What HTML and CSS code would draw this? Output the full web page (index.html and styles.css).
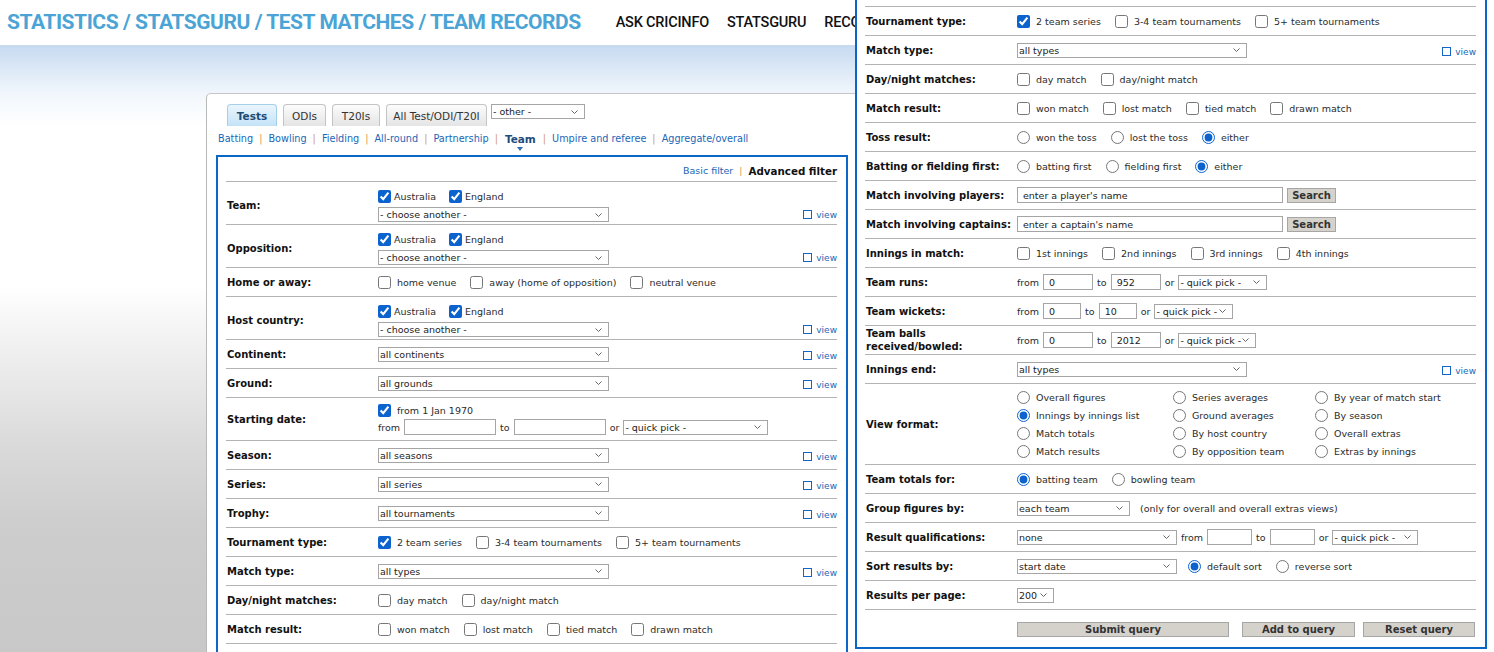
FILE: index.html
```html
<!DOCTYPE html>
<html lang="en">
<head>
<meta charset="utf-8">
<title>Statsguru - Team records</title>
<link rel="stylesheet" href="styles.css">
</head>
<body>
<header class="top">
  <h1 class="crumb">STATISTICS / STATSGURU / TEST MATCHES / TEAM RECORDS</h1>
  <nav class="topnav"><a href="#">ASK CRICINFO</a><a href="#">STATSGURU</a><a href="#">RECORDS</a></nav>
</header>
<main class="stage">
  <section class="panel">
    <div class="tabs">
      <span class="tab on w-tests">Tests</span>
      <span class="tab w-odi">ODIs</span>
      <span class="tab w-t20">T20Is</span>
      <span class="tab w-all">All Test/ODI/T20I</span>
      <span class="sel w94">- other -<svg class="chev" viewBox="0 0 7 4"><path d="M.5.5 3.5 3.5 6.5.5"/></svg></span>
    </div>
    <nav class="types">
      <a href="#">Batting</a><i>|</i><a href="#">Bowling</a><i>|</i><a href="#">Fielding</a><i>|</i><a href="#">All-round</a><i>|</i><a href="#">Partnership</a><i>|</i><b class="cur">Team</b><i>|</i><a href="#">Umpire and referee</a><i>|</i><a href="#">Aggregate/overall</a>
    </nav>
    <form class="query main">
      <div class="switch"><a href="#">Basic filter</a><i>|</i><b>Advanced filter</b></div>

      <div class="row dbl">
        <div class="lab">Team:</div>
        <div class="ctl">
          <div class="line"><label class="ck tight"><input type="checkbox" checked>Australia</label><label class="ck tight"><input type="checkbox" checked>England</label></div>
          <div class="line"><span class="sel w231">- choose another -<svg class="chev" viewBox="0 0 7 4"><path d="M.5.5 3.5 3.5 6.5.5"/></svg></span></div>
        </div>
        <label class="view"><i></i>view</label>
      </div>

      <div class="row dbl">
        <div class="lab">Opposition:</div>
        <div class="ctl">
          <div class="line"><label class="ck tight"><input type="checkbox" checked>Australia</label><label class="ck tight"><input type="checkbox" checked>England</label></div>
          <div class="line"><span class="sel w231">- choose another -<svg class="chev" viewBox="0 0 7 4"><path d="M.5.5 3.5 3.5 6.5.5"/></svg></span></div>
        </div>
        <label class="view"><i></i>view</label>
      </div>

      <div class="row">
        <div class="lab">Home or away:</div>
        <div class="ctl"><div class="line"><label class="ck"><input type="checkbox">home venue</label><label class="ck"><input type="checkbox">away (home of opposition)</label><label class="ck"><input type="checkbox">neutral venue</label></div></div>
      </div>

      <div class="row dbl">
        <div class="lab">Host country:</div>
        <div class="ctl">
          <div class="line"><label class="ck tight"><input type="checkbox" checked>Australia</label><label class="ck tight"><input type="checkbox" checked>England</label></div>
          <div class="line"><span class="sel w231">- choose another -<svg class="chev" viewBox="0 0 7 4"><path d="M.5.5 3.5 3.5 6.5.5"/></svg></span></div>
        </div>
        <label class="view"><i></i>view</label>
      </div>

      <div class="row">
        <div class="lab">Continent:</div>
        <div class="ctl"><div class="line"><span class="sel w231">all continents<svg class="chev" viewBox="0 0 7 4"><path d="M.5.5 3.5 3.5 6.5.5"/></svg></span></div></div>
        <label class="view"><i></i>view</label>
      </div>

      <div class="row">
        <div class="lab">Ground:</div>
        <div class="ctl"><div class="line"><span class="sel w231">all grounds<svg class="chev" viewBox="0 0 7 4"><path d="M.5.5 3.5 3.5 6.5.5"/></svg></span></div></div>
        <label class="view"><i></i>view</label>
      </div>

      <div class="row">
        <div class="lab">Starting date:</div>
        <div class="ctl g1">
          <div class="line"><label class="ck"><input type="checkbox" checked>from 1 Jan 1970</label></div>
          <div class="line">from<input class="txt w92" type="text" value="">to<input class="txt w92" type="text" value="">or<span class="sel w145">- quick pick -<svg class="chev" viewBox="0 0 7 4"><path d="M.5.5 3.5 3.5 6.5.5"/></svg></span></div>
        </div>
      </div>

      <div class="row">
        <div class="lab">Season:</div>
        <div class="ctl"><div class="line"><span class="sel w231">all seasons<svg class="chev" viewBox="0 0 7 4"><path d="M.5.5 3.5 3.5 6.5.5"/></svg></span></div></div>
        <label class="view"><i></i>view</label>
      </div>

      <div class="row">
        <div class="lab">Series:</div>
        <div class="ctl"><div class="line"><span class="sel w231">all series<svg class="chev" viewBox="0 0 7 4"><path d="M.5.5 3.5 3.5 6.5.5"/></svg></span></div></div>
        <label class="view"><i></i>view</label>
      </div>

      <div class="row">
        <div class="lab">Trophy:</div>
        <div class="ctl"><div class="line"><span class="sel w231">all tournaments<svg class="chev" viewBox="0 0 7 4"><path d="M.5.5 3.5 3.5 6.5.5"/></svg></span></div></div>
        <label class="view"><i></i>view</label>
      </div>

      <div class="row">
        <div class="lab">Tournament type:</div>
        <div class="ctl"><div class="line"><label class="ck"><input type="checkbox" checked>2 team series</label><label class="ck"><input type="checkbox">3-4 team tournaments</label><label class="ck"><input type="checkbox">5+ team tournaments</label></div></div>
      </div>

      <div class="row">
        <div class="lab">Match type:</div>
        <div class="ctl"><div class="line"><span class="sel w231">all types<svg class="chev" viewBox="0 0 7 4"><path d="M.5.5 3.5 3.5 6.5.5"/></svg></span></div></div>
        <label class="view"><i></i>view</label>
      </div>

      <div class="row">
        <div class="lab">Day/night matches:</div>
        <div class="ctl"><div class="line"><label class="ck"><input type="checkbox">day match</label><label class="ck"><input type="checkbox">day/night match</label></div></div>
      </div>

      <div class="row">
        <div class="lab">Match result:</div>
        <div class="ctl"><div class="line"><label class="ck"><input type="checkbox">won match</label><label class="ck"><input type="checkbox">lost match</label><label class="ck"><input type="checkbox">tied match</label><label class="ck"><input type="checkbox">drawn match</label></div></div>
      </div>
    </form>
  </section>
</main>

<aside class="shot">
  <div class="query cont">
    <div class="tail"></div>

    <div class="row">
      <div class="lab">Tournament type:</div>
      <div class="ctl"><div class="line"><label class="ck"><input type="checkbox" checked>2 team series</label><label class="ck"><input type="checkbox">3-4 team tournaments</label><label class="ck"><input type="checkbox">5+ team tournaments</label></div></div>
    </div>

    <div class="row">
      <div class="lab">Match type:</div>
      <div class="ctl"><div class="line"><span class="sel w230">all types<svg class="chev" viewBox="0 0 7 4"><path d="M.5.5 3.5 3.5 6.5.5"/></svg></span></div></div>
      <label class="view"><i></i>view</label>
    </div>

    <div class="row">
      <div class="lab">Day/night matches:</div>
      <div class="ctl"><div class="line"><label class="ck"><input type="checkbox">day match</label><label class="ck"><input type="checkbox">day/night match</label></div></div>
    </div>

    <div class="row">
      <div class="lab">Match result:</div>
      <div class="ctl"><div class="line"><label class="ck"><input type="checkbox">won match</label><label class="ck"><input type="checkbox">lost match</label><label class="ck"><input type="checkbox">tied match</label><label class="ck"><input type="checkbox">drawn match</label></div></div>
    </div>

    <div class="row">
      <div class="lab">Toss result:</div>
      <div class="ctl"><div class="line"><label class="ck"><input type="radio" name="toss">won the toss</label><label class="ck"><input type="radio" name="toss">lost the toss</label><label class="ck"><input type="radio" name="toss" checked>either</label></div></div>
    </div>

    <div class="row">
      <div class="lab">Batting or fielding first:</div>
      <div class="ctl"><div class="line"><label class="ck"><input type="radio" name="bat">batting first</label><label class="ck"><input type="radio" name="bat">fielding first</label><label class="ck"><input type="radio" name="bat" checked>either</label></div></div>
    </div>

    <div class="row">
      <div class="lab">Match involving players:</div>
      <div class="ctl"><div class="line"><input class="txt w266" type="text" value="enter a player's name"><button class="btn srch" type="button">Search</button></div></div>
    </div>

    <div class="row">
      <div class="lab">Match involving captains:</div>
      <div class="ctl"><div class="line"><input class="txt w266" type="text" value="enter a captain's name"><button class="btn srch" type="button">Search</button></div></div>
    </div>

    <div class="row">
      <div class="lab">Innings in match:</div>
      <div class="ctl"><div class="line"><label class="ck"><input type="checkbox">1st innings</label><label class="ck"><input type="checkbox">2nd innings</label><label class="ck"><input type="checkbox">3rd innings</label><label class="ck"><input type="checkbox">4th innings</label></div></div>
    </div>

    <div class="row">
      <div class="lab">Team runs:</div>
      <div class="ctl"><div class="line">from<input class="txt w50" type="text" value="0">to<input class="txt w50" type="text" value="952">or<span class="sel w89">- quick pick -<svg class="chev" viewBox="0 0 7 4"><path d="M.5.5 3.5 3.5 6.5.5"/></svg></span></div></div>
    </div>

    <div class="row">
      <div class="lab">Team wickets:</div>
      <div class="ctl"><div class="line">from<input class="txt w38" type="text" value="0">to<input class="txt w38" type="text" value="10">or<span class="sel w79">- quick pick -<svg class="chev" viewBox="0 0 7 4"><path d="M.5.5 3.5 3.5 6.5.5"/></svg></span></div></div>
    </div>

    <div class="row tight-row">
      <div class="lab">Team balls<br>received/bowled:</div>
      <div class="ctl"><div class="line">from<input class="txt w50" type="text" value="0">to<input class="txt w50" type="text" value="2012">or<span class="sel w78">- quick pick -<svg class="chev" viewBox="0 0 7 4"><path d="M.5.5 3.5 3.5 6.5.5"/></svg></span></div></div>
    </div>

    <div class="row">
      <div class="lab">Innings end:</div>
      <div class="ctl"><div class="line"><span class="sel w230">all types<svg class="chev" viewBox="0 0 7 4"><path d="M.5.5 3.5 3.5 6.5.5"/></svg></span></div></div>
      <label class="view"><i></i>view</label>
    </div>

    <div class="row vf-row">
      <div class="lab">View format:</div>
      <div class="vf">
        <label class="ck"><input type="radio" name="vf">Overall figures</label>
        <label class="ck"><input type="radio" name="vf">Series averages</label>
        <label class="ck"><input type="radio" name="vf">By year of match start</label>
        <label class="ck"><input type="radio" name="vf" checked>Innings by innings list</label>
        <label class="ck"><input type="radio" name="vf">Ground averages</label>
        <label class="ck"><input type="radio" name="vf">By season</label>
        <label class="ck"><input type="radio" name="vf">Match totals</label>
        <label class="ck"><input type="radio" name="vf">By host country</label>
        <label class="ck"><input type="radio" name="vf">Overall extras</label>
        <label class="ck"><input type="radio" name="vf">Match results</label>
        <label class="ck"><input type="radio" name="vf">By opposition team</label>
        <label class="ck"><input type="radio" name="vf">Extras by innings</label>
      </div>
    </div>

    <div class="row">
      <div class="lab">Team totals for:</div>
      <div class="ctl"><div class="line"><label class="ck"><input type="radio" name="tt" checked>batting team</label><label class="ck"><input type="radio" name="tt">bowling team</label></div></div>
    </div>

    <div class="row">
      <div class="lab">Group figures by:</div>
      <div class="ctl"><div class="line"><span class="sel w113">each team<svg class="chev" viewBox="0 0 7 4"><path d="M.5.5 3.5 3.5 6.5.5"/></svg></span><span class="note">(only for overall and overall extras views)</span></div></div>
    </div>

    <div class="row">
      <div class="lab">Result qualifications:</div>
      <div class="ctl"><div class="line"><span class="sel w160">none<svg class="chev" viewBox="0 0 7 4"><path d="M.5.5 3.5 3.5 6.5.5"/></svg></span>from<input class="txt w45" type="text" value="">to<input class="txt w45" type="text" value="">or<span class="sel w86">- quick pick -<svg class="chev" viewBox="0 0 7 4"><path d="M.5.5 3.5 3.5 6.5.5"/></svg></span></div></div>
    </div>

    <div class="row">
      <div class="lab">Sort results by:</div>
      <div class="ctl"><div class="line"><span class="sel w160">start date<svg class="chev" viewBox="0 0 7 4"><path d="M.5.5 3.5 3.5 6.5.5"/></svg></span><label class="ck sortgap"><input type="radio" name="sort" checked>default sort</label><label class="ck"><input type="radio" name="sort">reverse sort</label></div></div>
    </div>

    <div class="row">
      <div class="lab">Results per page:</div>
      <div class="ctl"><div class="line"><span class="sel w37">200<svg class="chev" viewBox="0 0 7 4"><path d="M.5.5 3.5 3.5 6.5.5"/></svg></span></div></div>
    </div>

    <div class="actions">
      <button class="btn w212" type="button">Submit query</button>
      <button class="btn w113b" type="button">Add to query</button>
      <button class="btn w112" type="button">Reset query</button>
    </div>
  </div>
</aside>
</body>
</html>
```

FILE: styles.css
```css
* { box-sizing: border-box; }

html, body {
  margin: 0;
  height: 652px;
  overflow: hidden;
}

body {
  position: relative;
  background: #fff;
  font-family: "DejaVu Sans", Verdana, sans-serif;
  font-size: 9.5px;
  color: #2b2b2b;
}

a { color: #1a66b8; text-decoration: none; }

/* ---------- header ---------- */
.top {
  width: 855px;
  height: 45px;
  overflow: hidden;
  display: flex;
  align-items: center;
  padding-left: 7px;
  background: #fff;
}
.crumb {
  flex: none;
  margin: 0 35px 0 0;
  font-family: Roboto, sans-serif;
  font-weight: 700;
  font-size: 21px;
  line-height: 1;
  letter-spacing: -0.45px;
  color: #4ba4d5;
  white-space: nowrap;
}
.topnav {
  flex: none;
  display: flex;
  gap: 18px;
  white-space: nowrap;
}
.topnav a {
  font-family: Roboto, sans-serif;
  font-weight: 500;
  font-size: 14.5px;
  letter-spacing: -0.2px;
  color: #111;
}

/* ---------- page body ---------- */
.stage {
  height: 607px;
  padding: 48px 0 0 206px;
  background: linear-gradient(to bottom,
    #c6daf0 0, #dde9f7 25px, #f2f7fc 50px, #fff 80px,
    #fff 240px, #ececec 320px, #dadada 400px, #cdcdcd 480px, #c8c8c8 607px);
}
.panel {
  width: 700px;
  height: 560px;
  background: #fff;
  border-left: 1px solid #b8b8b8;
  border-top: 1px solid #c6c6c6;
  border-top-left-radius: 5px;
  padding: 10px 0 0 9px;
}

/* tabs */
.tabs {
  display: flex;
  align-items: flex-start;
  gap: 6px;
  margin-left: 11px;
  height: 22px;
}
.tab {
  height: 22px;
  display: flex;
  align-items: center;
  justify-content: center;
  border: 1px solid #c4c4c4;
  border-bottom: 0;
  border-radius: 4px 4px 0 0;
  background: linear-gradient(#fcfcfc, #e4e4e4);
  font-size: 10.5px;
  color: #333;
}
.tab.on {
  background: linear-gradient(#eaf5fd, #c4e3f7);
  border-color: #a4cfe9;
  font-weight: 700;
  color: #1c4b77;
}
.w-tests { width: 50px; }
.w-odi { width: 43px; }
.w-t20 { width: 48px; }
.w-all { width: 101px; }
.tabs .sel { margin-left: -2px; }

/* type links */
.types {
  display: flex;
  align-items: center;
  height: 14px;
  margin: 6px 0 9px 2px;
  font-size: 9.7px;
  line-height: 14px;
  white-space: nowrap;
}
.types i, .switch i {
  font-style: normal;
  color: #d49b5c;
  margin: 0 6px;
}
.types .cur {
  position: relative;
  color: #1f4c7c;
  font-size: 10.5px;
  margin: 0 1px;
}
.types .cur::after {
  content: "";
  position: absolute;
  left: 50%;
  top: 15px;
  margin-left: -3px;
  border-left: 3px solid transparent;
  border-right: 3px solid transparent;
  border-top: 4px solid #2c6fb6;
}

/* ---------- query form ---------- */
.query {
  width: 632px;
  background: #fff;
  border: 2px solid #0c66c5;
  padding: 0 9px 0 8px;
  margin: 0;
}
.query.main { min-height: 520px; }
.switch {
  height: 25px;
  display: flex;
  justify-content: flex-end;
  align-items: center;
  padding-top: 3px;
  border-bottom: 1px solid #b3b3b3;
}
.switch b { font-size: 10.3px; color: #111; }

.row {
  display: flex;
  align-items: center;
  padding: 5px 0;
  border-bottom: 1px solid #b3b3b3;
}
.row.dbl { padding: 7px 0 2px; }
.row.dbl .ctl { gap: 3px; }
.lab {
  flex: none;
  width: 152px;
  padding-left: 1px;
  font-weight: 700;
  font-size: 10px;
  line-height: 13px;
  color: #111;
}
.ctl {
  flex: 1;
  display: flex;
  flex-direction: column;
  justify-content: center;
  gap: 2px;
  min-height: 18px;
}
.ctl.g1 { gap: 1px; }
.line {
  display: flex;
  align-items: center;
  gap: 4px;
  min-height: 15px;
  white-space: nowrap;
}

input[type=checkbox], input[type=radio] {
  width: 13px;
  height: 13px;
  margin: 0;
  flex: none;
  accent-color: #0d63ce;
}
.ck {
  display: inline-flex;
  align-items: center;
  gap: 6px;
  margin-right: 10px;
  white-space: nowrap;
}
.ck.tight { gap: 3px; margin-right: 9px; }
.ck.sortgap { margin-left: 7px; }

.sel {
  flex: none;
  display: inline-flex;
  align-items: center;
  justify-content: space-between;
  height: 15px;
  border: 1px solid #a5a5a5;
  background: #fff;
  padding: 0 6px 0 1px;
  color: #222;
  line-height: 13px;
  white-space: nowrap;
}
.chev {
  width: 7px;
  height: 4px;
  fill: none;
  stroke: #666;
  stroke-width: 1;
}
.w231 { width: 231px; }
.w230 { width: 230px; }
.w145 { width: 145px; }
.w94 { width: 94px; }
.w89 { width: 89px; }
.w79 { width: 79px; }
.w78 { width: 78px; }
.w113 { width: 113px; }
.w160 { width: 160px; }
.w86 { width: 86px; }
.w37 { width: 37px; }

.txt {
  flex: none;
  height: 16px;
  border: 1px solid #a5a5a5;
  padding: 0 0 0 5px;
  margin: 0;
  font-family: "DejaVu Sans", Verdana, sans-serif;
  font-size: 9.5px;
  color: #222;
  background: #fff;
  outline: none;
}
.w92 { width: 92px; }
.w50 { width: 50px; }
.w38 { width: 38px; }
.w45 { width: 45px; }
.w266 { width: 266px; }

.view {
  flex: none;
  align-self: flex-end;
  display: flex;
  align-items: center;
  gap: 4px;
  height: 15px;
  font-size: 9px;
  color: #1a66b8;
}
.view i {
  width: 9px;
  height: 9px;
  border: 1px solid #1565c8;
}

.note { margin-left: 6px; }

.btn {
  height: 15px;
  padding: 0;
  border: 1px solid #a6a6a6;
  background: #d5d2cc;
  font-family: "DejaVu Sans", Verdana, sans-serif;
  font-weight: 700;
  font-size: 10px;
  line-height: 13px;
  color: #333;
}
.btn.srch { width: 49px; }

/* ---------- scrolled continuation window ---------- */
.shot {
  position: absolute;
  left: 855px;
  top: 0;
  width: 639px;
  height: 652px;
  background: #fff;
  overflow: hidden;
  z-index: 5;
}
.query.cont { border-top: 0; }
.tail {
  height: 7px;
  border-bottom: 1px solid #b3b3b3;
}
.tight-row { padding: 1px 0; }
.vf-row { padding: 4px 0; }
.vf {
  flex: 1;
  display: grid;
  grid-template-columns: 156px 142px auto;
  grid-auto-rows: 18px;
  align-items: center;
}
.actions {
  display: flex;
  padding: 12px 0 10px 152px;
}
.w212 { width: 212px; margin-right: 13px; }
.w113b { width: 113px; margin-right: 8px; }
.w112 { width: 112px; }
```
